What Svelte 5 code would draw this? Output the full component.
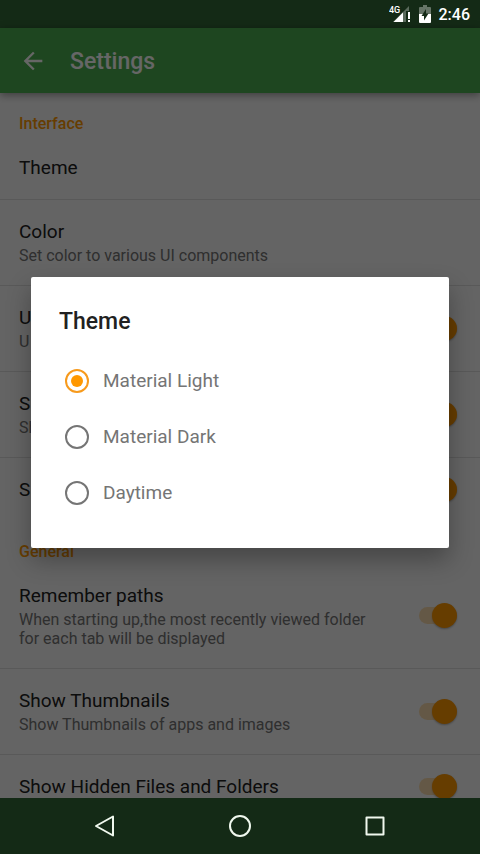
<script>
  const sections = [
    {
      name: 'Interface',
      rows: [
        { title: 'Theme' },
        { title: 'Color', summary: 'Set color to various UI components' },
        { title: 'U', summary: 'U', toggle: true },
        { title: 'S', summary: 'Sh', toggle: true },
        { title: 'S', toggle: true },
      ],
    },
    {
      name: 'General',
      rows: [
        {
          title: 'Remember paths',
          summary: 'When starting up,the most recently viewed folder for each tab will be displayed',
          toggle: true,
        },
        {
          title: 'Show Thumbnails',
          summary: 'Show Thumbnails of apps and images',
          toggle: true,
        },
        { title: 'Show Hidden Files and Folders', toggle: true },
      ],
    },
  ];

  const themes = ['Material Light', 'Material Dark', 'Daytime'];
  let theme = $state('Material Light');
</script>

<div class="screen">
  <div class="status">
    <svg class="signal" width="24" height="20" viewBox="0 0 24 20">
      <path d="M20 2 V7 H17 V18 H4 Z" fill="#fff" opacity=".3" />
      <path d="M14 8.500 V18 H4.500 Z" fill="#fff" />
      <path d="M19 8h2v7h-2zM19 16h2v2h-2z" fill="#fff" />
      <text x="0" y="9" font-size="9" font-weight="500" fill="#fff">4G</text>
    </svg>
    <svg class="battery" width="12" height="18" viewBox="0 0 12 18">
      <path d="M4 0h4v2h3q1 0 1 1v6H0V3q0-1 1-1h3z" fill="#fff" opacity=".35" />
      <path d="M0 9h12v8q0 1-1 1H1q-1 0-1-1z" fill="#fff" />
      <path d="M7 4 L2.500 11 H5 V15.500 L9.500 8.500 H7z" fill="#142a16" />
    </svg>
    <span class="time">2:46</span>
  </div>

  <div class="app">
    <header>
      <button class="back" aria-label="Back">
        <svg width="28" height="28" viewBox="0 0 24 24">
          <path d="M20 11H7.830l5.590-5.590L12 4l-8 8 8 8 1.410-1.410L7.830 13H20v-2z" fill="currentColor" />
        </svg>
      </button>
      <h1>Settings</h1>
    </header>

    <main>
      {#each sections as section}
        <section>
          <h2>{section.name}</h2>
          {#each section.rows as row}
            <label class="row">
              <span class="text">
                <span class="title">{row.title}</span>
                {#if row.summary}<span class="summary">{row.summary}</span>{/if}
              </span>
              {#if row.toggle}
                <input class="switch" type="checkbox" role="switch" checked />
              {/if}
            </label>
          {/each}
        </section>
      {/each}
    </main>

    <div class="scrim">
      <div class="dialog" role="dialog" aria-modal="true" aria-labelledby="dialog-title">
        <h3 id="dialog-title">Theme</h3>
        {#each themes as name}
          <label class="option">
            <input type="radio" name="theme" value={name} bind:group={theme} />
            <span>{name}</span>
          </label>
        {/each}
      </div>
    </div>
  </div>

  <nav>
    <button aria-label="Back">
      <svg width="24" height="24" viewBox="0 0 24 24">
        <path d="M20 2.500 V21.500 L3 12 Z" />
      </svg>
    </button>
    <button aria-label="Home">
      <svg width="24" height="24" viewBox="0 0 24 24">
        <circle cx="12" cy="12" r="10" />
      </svg>
    </button>
    <button aria-label="Recent apps">
      <svg width="24" height="24" viewBox="0 0 24 24">
        <rect x="3.500" y="3.500" width="17" height="17" />
      </svg>
    </button>
  </nav>
</div>

<style>
  :global(body) {
    font-family: Roboto, sans-serif;
    background: #142a16;
  }

  .screen {
    display: flex;
    flex-direction: column;
    height: 100vh;
    overflow: hidden;
  }

  button {
    display: flex;
    padding: 0;
    border: none;
    background: none;
    color: inherit;
    cursor: pointer;
  }

  /* system bars */
  .status {
    flex: 0 0 28px;
    display: flex;
    align-items: center;
    justify-content: flex-end;
    padding-right: 10px;
    background: #142a16;
    color: #fff;
  }
  .battery { margin: 0 8px 0 6px; }
  .time {
    padding-top: 2px;
    font-size: 16px;
    font-weight: 500;
    line-height: 20px;
  }
  nav {
    flex: 0 0 56px;
    display: flex;
    align-items: center;
    justify-content: center;
    gap: 111px;
    background: #142a16;
  }
  nav svg {
    fill: none;
    stroke: #f0f8ee;
    stroke-width: 2;
    stroke-linejoin: round;
  }

  .app {
    position: relative;
    flex: 1;
    min-height: 0;
    display: flex;
    flex-direction: column;
    background: #fafafa;
  }

  header {
    flex: 0 0 65px;
    display: flex;
    align-items: center;
    gap: 23px;
    padding: 0 19px;
    background: #4caf50;
    box-shadow: 0 2px 8px rgba(0, 0, 0, .4);
    color: #fff;
    z-index: 1;
  }
  h1 {
    margin: 0;
    padding-top: 2px;
    font-size: 23px;
    font-weight: 500;
    line-height: 28px;
  }

  main {
    flex: 1;
    min-height: 0;
    overflow: hidden;
  }
  h2 {
    margin: 0;
    padding: 21px 19px 2px;
    color: #ff9800;
    font-size: 16px;
    font-weight: 500;
    line-height: 20px;
  }

  .row {
    display: flex;
    align-items: center;
    justify-content: space-between;
    gap: 19px;
    padding: 21px 23px 20px 19px;
    border-bottom: 1px solid #dedede;
  }
  .row:last-child { border-bottom: none; }
  .text {
    display: flex;
    flex-direction: column;
    gap: 3px;
    max-width: 360px;
  }
  .title {
    color: #212121;
    font-size: 19px;
    line-height: 22px;
  }
  .summary {
    color: #757575;
    font-size: 16px;
    line-height: 19px;
  }

  .switch {
    appearance: none;
    flex: none;
    display: grid;
    align-items: center;
    width: 38px;
    height: 25px;
    margin: -3px 0 -1px;
  }
  .switch::before,
  .switch::after {
    content: '';
    grid-area: 1 / 1;
  }
  .switch::before {
    height: 17px;
    border-radius: 9px;
    background: #ff9800;
    opacity: .3;
  }
  .switch::after {
    justify-self: end;
    width: 25px;
    height: 25px;
    border-radius: 50%;
    background: #ff9800;
    box-shadow: 0 1px 2px rgba(0, 0, 0, .3);
  }
  .switch:not(:checked)::before { background: #000; }
  .switch:not(:checked)::after {
    justify-self: start;
    background: #f1f1f1;
  }

  /* dialog, dims everything between the system bars */
  .scrim {
    position: absolute;
    inset: 0;
    z-index: 2;
    display: flex;
    align-items: center;
    padding: 0 31px 2px;
    background: rgba(0, 0, 0, .6);
  }
  .dialog {
    flex: 1;
    padding: 31px 28px 27px;
    border-radius: 2px;
    background: #fff;
    box-shadow: 0 12px 24px rgba(0, 0, 0, .3);
  }
  h3 {
    margin: 0 0 17px;
    color: #212121;
    font-size: 23px;
    font-weight: 500;
    line-height: 28px;
  }
  .option {
    display: flex;
    align-items: center;
    gap: 14px;
    height: 56px;
    padding-left: 6px;
    color: #757575;
    font-size: 19px;
    line-height: 22px;
    cursor: pointer;
  }
  .option input {
    appearance: none;
    display: grid;
    place-items: center;
    box-sizing: border-box;
    width: 24px;
    height: 24px;
    margin: 0;
    border: 2px solid #757575;
    border-radius: 50%;
  }
  .option input:checked { border-color: #f79a1c; }
  .option input:checked::after {
    content: '';
    width: 12px;
    height: 12px;
    border-radius: 50%;
    background: #ff9800;
  }
</style>
